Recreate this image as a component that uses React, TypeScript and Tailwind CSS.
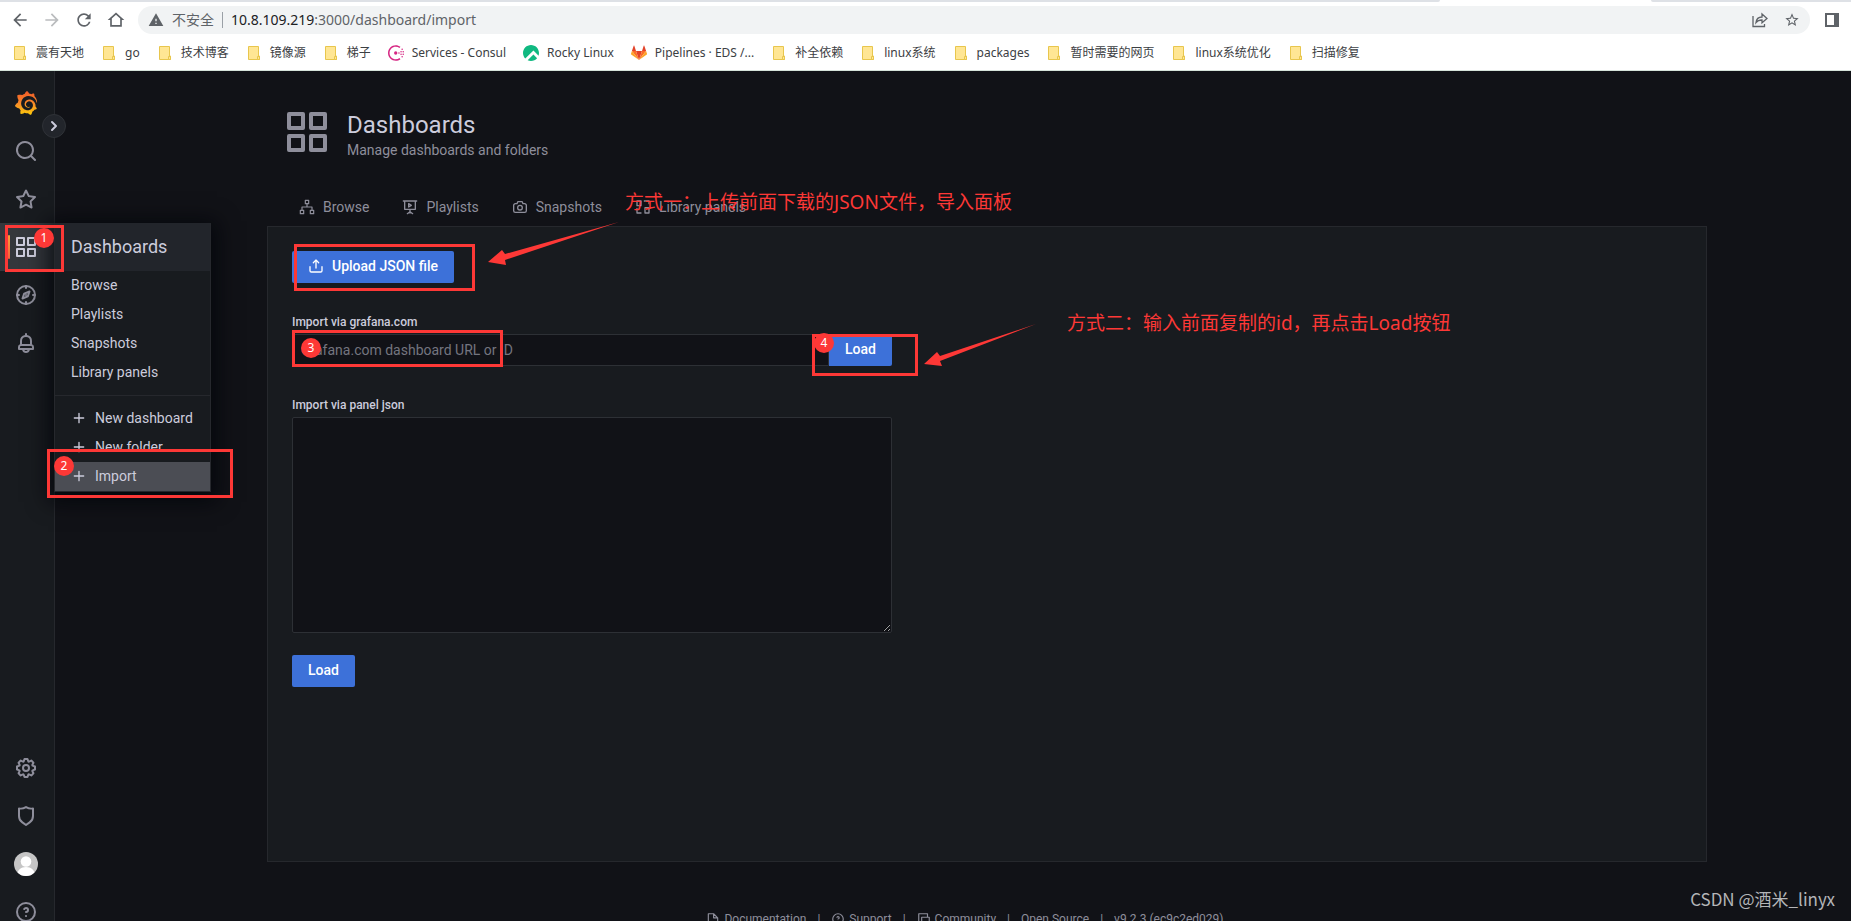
import { useState, type ReactNode } from "react";
import { SiConsul, SiGrafana, SiRockylinux } from "react-icons/si";

const ICON_PATHS = {
  apps: "M10,13H3a1,1,0,0,0-1,1v7a1,1,0,0,0,1,1h7a1,1,0,0,0,1-1V14A1,1,0,0,0,10,13ZM9,20H4V15H9ZM21,2H14a1,1,0,0,0-1,1v7a1,1,0,0,0,1,1h7a1,1,0,0,0,1-1V3A1,1,0,0,0,21,2ZM20,9H15V4h5Zm1,4H14a1,1,0,0,0-1,1v7a1,1,0,0,0,1,1h7a1,1,0,0,0,1-1V14A1,1,0,0,0,21,13Zm-1,7H15V15h5ZM10,2H3A1,1,0,0,0,2,3v7a1,1,0,0,0,1,1h7a1,1,0,0,0,1-1V3A1,1,0,0,0,10,2ZM9,9H4V4H9Z",
  search:
    "M21.71,20.29,18,16.61A9,9,0,1,0,16.61,18l3.68,3.68a1,1,0,0,0,1.42,0A1,1,0,0,0,21.71,20.29ZM11,18a7,7,0,1,1,7-7A7,7,0,0,1,11,18Z",
  star: "M22,9.67A1,1,0,0,0,21.14,9l-5.69-.83L12.9,3a1,1,0,0,0-1.8,0L8.55,8.16,2.86,9a1,1,0,0,0-.81.68,1,1,0,0,0,.25,1l4.13,4-1,5.68A1,1,0,0,0,6.9,21.44L12,18.77l5.1,2.67a.93.93,0,0,0,.46.12,1,1,0,0,0,.59-.19,1,1,0,0,0,.4-1l-1-5.68,4.13-4A1,1,0,0,0,22,9.67Zm-6.15,4a1,1,0,0,0-.29.88l.72,4.2-3.76-2a1.06,1.06,0,0,0-.94,0l-3.76,2,.72-4.2a1,1,0,0,0-.29-.88l-3-3,4.21-.61a1,1,0,0,0,.76-.55L12,5.7l1.88,3.82a1,1,0,0,0,.76.55l4.21.61Z",
  bell: "M18,13.18V10a6,6,0,0,0-5-5.91V3a1,1,0,0,0-2,0V4.09A6,6,0,0,0,6,10v3.18A3,3,0,0,0,4,16v2a1,1,0,0,0,1,1H8.14a4,4,0,0,0,7.72,0H19a1,1,0,0,0,1-1V16A3,3,0,0,0,18,13.18ZM8,10a4,4,0,0,1,8,0v3H8Zm4,10a2,2,0,0,1-1.72-1h3.44A2,2,0,0,1,12,20Zm6-3H6V16a1,1,0,0,1,1-1H17a1,1,0,0,1,1,1Z",
  cog: "M21.32,9.55l-1.89-.63.89-1.78A1,1,0,0,0,20.13,6L18,3.87a1,1,0,0,0-1.15-.19l-1.78.89-.63-1.89A1,1,0,0,0,13.5,2h-3a1,1,0,0,0-.95.68L8.92,4.57,7.14,3.68A1,1,0,0,0,6,3.87L3.87,6a1,1,0,0,0-.19,1.15l.89,1.78-1.89.63A1,1,0,0,0,2,10.5v3a1,1,0,0,0,.68.95l1.89.63-.89,1.78A1,1,0,0,0,3.87,18L6,20.13a1,1,0,0,0,1.15.19l1.78-.89.63,1.89a1,1,0,0,0,.95.68h3a1,1,0,0,0,.95-.68l.63-1.89,1.78.89A1,1,0,0,0,18,20.13L20.13,18a1,1,0,0,0,.19-1.15l-.89-1.78,1.89-.63A1,1,0,0,0,22,13.5v-3A1,1,0,0,0,21.32,9.55ZM20,12.78l-1.2.4A2,2,0,0,0,17.64,16l.57,1.14-1.1,1.1L16,17.64a2,2,0,0,0-2.79,1.16l-.4,1.2H11.22l-.4-1.2A2,2,0,0,0,8,17.64l-1.14.57-1.1-1.1L6.36,16A2,2,0,0,0,5.2,13.18L4,12.78V11.22l1.2-.4A2,2,0,0,0,6.36,8L5.79,6.89l1.1-1.1L8,6.36A2,2,0,0,0,10.82,5.2l.4-1.2h1.56l.4,1.2A2,2,0,0,0,16,6.36l1.14-.57,1.1,1.1L17.64,8a2,2,0,0,0,1.16,2.79l1.2.4ZM12,8a4,4,0,1,0,4,4A4,4,0,0,0,12,8Zm0,6a2,2,0,1,1,2-2A2,2,0,0,1,12,14Z",
  shield:
    "M19.63,3.65a1,1,0,0,0-.84-.2,8,8,0,0,1-6.22-1.27,1,1,0,0,0-1.14,0A8,8,0,0,1,5.21,3.45a1,1,0,0,0-.84.2A1,1,0,0,0,4,4.43v7.45a9,9,0,0,0,3.77,7.33l3.65,2.6a1,1,0,0,0,1.16,0l3.65-2.6A9,9,0,0,0,20,11.88V4.43A1,1,0,0,0,19.63,3.65ZM18,11.88a7,7,0,0,1-2.93,5.7L12,19.77,8.93,17.58A7,7,0,0,1,6,11.88V5.58a10,10,0,0,0,6-1.39,10,10,0,0,0,6,1.39Z",
  question:
    "M11.29,15.29a1.58,1.58,0,0,0-.12.15.76.76,0,0,0-.09.18.64.64,0,0,0-.06.18,1.36,1.36,0,0,0,0,.2.84.84,0,0,0,.08.38.9.9,0,0,0,.54.54.94.94,0,0,0,.76,0,.9.9,0,0,0,.54-.54A1,1,0,0,0,13,16a1,1,0,0,0-.29-.71A1,1,0,0,0,11.29,15.29ZM12,2A10,10,0,1,0,22,12,10,10,0,0,0,12,2Zm0,18a8,8,0,1,1,8-8A8,8,0,0,1,12,20ZM12,7A3,3,0,0,0,9.4,8.5a1,1,0,1,0,1.73,1A1,1,0,0,1,12,9a1,1,0,0,1,0,2,1,1,0,1,0,0,2,3,3,0,0,0,0-6Z",
  upload:
    "M8.71,7.71,11,5.41V15a1,1,0,0,0,2,0V5.41l2.29,2.3a1,1,0,0,0,1.42,0,1,1,0,0,0,0-1.42l-4-4a1,1,0,0,0-.33-.21,1,1,0,0,0-.76,0,1,1,0,0,0-.33.21l-4,4A1,1,0,1,0,8.71,7.71ZM21,12a1,1,0,0,0-1,1v6a1,1,0,0,1-1,1H5a1,1,0,0,1-1-1V13a1,1,0,0,0-2,0v6a3,3,0,0,0,3,3H19a3,3,0,0,0,3-3V13A1,1,0,0,0,21,12Z",
  plus: "M19,11H13V5a1,1,0,0,0-2,0v6H5a1,1,0,0,0,0,2h6v6a1,1,0,0,0,2,0V13h6a1,1,0,0,0,0-2Z",
  back: "M20 11H7.83l5.59-5.59L12 4l-8 8 8 8 1.41-1.41L7.83 13H20v-2z",
  forward: "M4 13h12.17l-5.59 5.59L12 20l8-8-8-8-1.41 1.41L16.17 11H4v2z",
  reload:
    "M17.65 6.35A7.958 7.958 0 0 0 12 4c-4.42 0-7.99 3.58-7.99 8s3.57 8 7.99 8c3.73 0 6.84-2.55 7.73-6h-2.08A5.99 5.99 0 0 1 12 18c-3.31 0-6-2.69-6-6s2.69-6 6-6c1.66 0 3.14.69 4.22 1.78L13 11h7V4l-2.35 2.35z",
  home: "M12 3L2 12h3v8h14v-8h3L12 3zm5 15H7v-7.8l5-4.5 5 4.5V18z",
  warning: "M1 21h22L12 2 1 21zm12-3h-2v-2h2v2zm0-4h-2v-4h2v4z",
  starOutline:
    "M22 9.24l-7.19-.62L12 2 9.19 8.63 2 9.24l5.46 4.73L5.82 21 12 17.27 18.18 21l-1.63-7.03L22 9.24zM12 15.4l-3.76 2.27 1-4.28-3.32-2.88 4.38-.38L12 6.1l1.71 4.04 4.38.38-3.32 2.88 1 4.28L12 15.4z",
};

function Icon({ name, className }: { name: keyof typeof ICON_PATHS; className: string }) {
  return (
    <svg viewBox="0 0 24 24" fill="currentColor" className={`shrink-0 ${className}`} aria-hidden="true">
      <path d={ICON_PATHS[name]} />
    </svg>
  );
}

function LineIcon({ className, children }: { className: string; children: ReactNode }) {
  return (
    <svg
      viewBox="0 0 24 24"
      fill="none"
      stroke="currentColor"
      strokeWidth={2}
      strokeLinejoin="round"
      strokeLinecap="round"
      className={`shrink-0 ${className}`}
      aria-hidden="true"
    >
      {children}
    </svg>
  );
}

function FolderIcon() {
  return (
    <svg viewBox="0 0 16 16" className="h-4 w-4 shrink-0" aria-hidden="true">
      <path d="M2.5 1.5h10v9.5h1v3.5h-11z" fill="#ffe694" stroke="#e8c64d" />
      <path d="M11.5 14.5v-3h2v3z" fill="#ffe694" stroke="#e8c64d" />
    </svg>
  );
}

function GitlabIcon() {
  return (
    <svg viewBox="0 0 16 16" className="h-4 w-4 shrink-0" aria-hidden="true">
      <path d="M8 15 11 6H5z" fill="#e24329" />
      <path d="M8 15 5 6H.9z" fill="#fc6d26" />
      <path d="M.9 6 0 8.7c-.1.3 0 .6.2.8L8 15z" fill="#fca326" />
      <path d="M.9 6H5L3.3.8c-.1-.3-.5-.3-.6 0z" fill="#e24329" />
      <path d="M8 15 11 6h4.100z" fill="#fc6d26" />
      <path d="m15.100 6 .9 2.700c.1.3 0 .6-.2.8L8 15z" fill="#fca326" />
      <path d="M15.100 6H11L12.700.8c.1-.3.5-.3.6 0z" fill="#e24329" />
    </svg>
  );
}

const bookmarks: { label: string; icon?: ReactNode }[] = [
  { label: "震有天地" },
  { label: "go" },
  { label: "技术博客" },
  { label: "镜像源" },
  { label: "梯子" },
  { label: "Services - Consul", icon: <SiConsul className="h-4 w-4 shrink-0 text-[#d62783]" /> },
  { label: "Rocky Linux", icon: <SiRockylinux className="h-4 w-4 shrink-0 text-[#10b981]" /> },
  { label: "Pipelines · EDS /...", icon: <GitlabIcon /> },
  { label: "补全依赖" },
  { label: "linux系统" },
  { label: "packages" },
  { label: "暂时需要的网页" },
  { label: "linux系统优化" },
  { label: "扫描修复" },
];

function BrowserChrome() {
  return (
    <header className="shrink-0 border-b border-[#d5e3da] bg-white font-['Noto_Sans','Noto_Sans_CJK_SC',sans-serif] text-[#5f6368]">
      <div className="flex h-0.5 justify-between">
        <div className="w-[1440px] rounded-br bg-[#dee1e6]" />
        <div className="w-[200px] rounded-bl bg-[#dee1e6]" />
      </div>
      <div className="flex h-9 items-center gap-3 pr-3 pl-[10px]">
        <button type="button" aria-label="Back">
          <Icon name="back" className="h-5 w-5" />
        </button>
        <button type="button" aria-label="Forward" className="text-[#babcbe]">
          <Icon name="forward" className="h-5 w-5" />
        </button>
        <button type="button" aria-label="Reload">
          <Icon name="reload" className="h-5 w-5" />
        </button>
        <button type="button" aria-label="Home">
          <Icon name="home" className="h-5 w-5" />
        </button>
        <div className="flex h-7 flex-1 items-center rounded-full bg-[#f1f3f4] px-[10px] text-sm">
          <Icon name="warning" className="h-4 w-4" />
          <span className="ml-2">不安全</span>
          <span className="mx-2 h-4 w-px bg-[#9aa0a6]" />
          <span className="flex-1">
            <span className="text-[#202124]">10.8.109.219</span>:3000/dashboard/import
          </span>
          <button type="button" aria-label="Share">
            <svg viewBox="0 0 16 16" fill="none" stroke="currentColor" strokeWidth={1.3} className="h-4 w-4">
              <path d="M1 4v10.500h11.500V12" />
              <path d="M4 10.500c.4-3.600 2.600-5.400 6-5.500V2l5 4.500-5 4.300V8c-2.700 0-4.600.7-6 2.500z" />
            </svg>
          </button>
          <button type="button" aria-label="Bookmark this page" className="ml-4">
            <Icon name="starOutline" className="h-4 w-4" />
          </button>
        </div>
        <button type="button" aria-label="Side panel" className="ml-[3px] h-3.5 w-3.5 border-2 border-r-[5px] border-[#5f6368]" />
      </div>
      <nav className="flex h-8 items-center gap-[17px] px-3 pb-0.5 text-xs text-[#3c4043]">
        {bookmarks.map((b) => (
          <a key={b.label} href="#" className="flex items-center gap-2 whitespace-nowrap">
            {b.icon ?? <FolderIcon />}
            {b.label}
          </a>
        ))}
      </nav>
    </header>
  );
}

function NavItem({ label, active, children }: { label: string; active?: boolean; children: ReactNode }) {
  return (
    <li className={active ? "relative bg-[#34373c] text-[#ccccdc]" : "text-[#8e8e9b]"}>
      {active && <span className="absolute top-3 left-2 h-6 w-0.5 rounded-sm bg-gradient-to-b from-[#f2a23a] to-[#f55f3e]" />}
      <a href="#" aria-label={label} className="flex h-12 w-[52px] items-center justify-center">
        {children}
      </a>
    </li>
  );
}

function DashboardsMenu() {
  const links = ["Browse", "Playlists", "Snapshots", "Library panels"];
  const actions = ["New dashboard", "New folder", "Import"];

  return (
    <div className="absolute top-0 left-[54px] z-10 w-[157px] border-r border-b border-l border-[#26282d] bg-[#181b1f] text-sm text-[#ccccdc] shadow-[0_4px_20px_6px_rgba(1,4,9,0.75)]">
      <h2 className="flex h-12 items-center bg-[#22252b] px-4 text-lg">Dashboards</h2>
      <ul>
        {links.map((l) => (
          <li key={l}>
            <a href="#" className="flex h-[29px] items-center px-4 pb-0.5">
              {l}
            </a>
          </li>
        ))}
      </ul>
      <hr className="my-2 border-[#26282d]" />
      <ul>
        {actions.map((a) => (
          <li key={a}>
            <a href="#" className={`flex h-[29px] items-center gap-2 px-4 pb-0.5 ${a === "Import" ? "bg-[#4b4d54]" : ""}`}>
              <Icon name="plus" className="h-4 w-4" />
              {a}
            </a>
          </li>
        ))}
      </ul>
    </div>
  );
}

function Sidebar() {
  return (
    <aside className="relative z-10 flex h-[calc(100vh-56px)] w-[55px] shrink-0 flex-col justify-between border-r border-[#26282d] bg-[#181b1f] pt-2">
      <ul className="relative">
        <NavItem label="Home">
          <svg className="absolute h-0 w-0" aria-hidden="true">
            <linearGradient id="grafana" x1="0" y1="0" x2="0" y2="1">
              <stop offset="0" stopColor="#f05a28" />
              <stop offset="0.500" stopColor="#f7882a" />
              <stop offset="1" stopColor="#fbca0a" />
            </linearGradient>
          </svg>
          <SiGrafana className="h-6 w-6" fill="url(#grafana)" />
        </NavItem>
        <NavItem label="Search">
          <Icon name="search" className="h-6 w-6" />
        </NavItem>
        <NavItem label="Starred">
          <Icon name="star" className="h-6 w-6" />
        </NavItem>
        <NavItem label="Dashboards" active>
          <Icon name="apps" className="h-6 w-6" />
        </NavItem>
        <NavItem label="Explore">
          <LineIcon className="h-6 w-6">
            <circle cx="12" cy="12" r="9" />
            <path d="M12 3v2M12 19v2M3 12h2M19 12h2" />
            <path d="M15.500 8.500 13.800 13.400 8.500 15.500 10.200 10.600z" />
            <path d="M12 12v.01" />
          </LineIcon>
        </NavItem>
        <NavItem label="Alerting">
          <Icon name="bell" className="h-6 w-6" />
        </NavItem>
        <li className="absolute top-36 left-0">
          <DashboardsMenu />
        </li>
      </ul>
      <ul>
        <NavItem label="Configuration">
          <Icon name="cog" className="h-6 w-6" />
        </NavItem>
        <NavItem label="Server Admin">
          <Icon name="shield" className="h-6 w-6" />
        </NavItem>
        <NavItem label="Profile">
          <svg viewBox="0 0 24 24" className="h-6 w-6 rounded-full bg-[#c5c5c5]" fill="#fff" aria-hidden="true">
            <circle cx="12" cy="9.500" r="5.300" />
            <path d="M3 24c0-6 4-9 9-9s9 3 9 9z" />
          </svg>
        </NavItem>
        <NavItem label="Help">
          <Icon name="question" className="h-6 w-6" />
        </NavItem>
      </ul>
      <button
        type="button"
        aria-label="Expand menu"
        className="absolute top-[43px] left-[42px] flex h-6 w-6 items-center justify-center rounded-full border border-[#2f3237] bg-[#22252b] text-[#ccccdc]"
      >
        <LineIcon className="h-4 w-4">
          <path d="m9 6 6 6-6 6" strokeWidth={3} />
        </LineIcon>
      </button>
    </aside>
  );
}

const tabs: { label: string; icon: ReactNode }[] = [
  {
    label: "Browse",
    icon: (
      <LineIcon className="h-4 w-4">
        <path
          d="M9.500 2h5v5h-5zM2 17h5v5H2zM17 17h5v5h-5zM12 7.500v4.500M4.500 16.500V12h15v4.500"
          strokeWidth={1.8}
        />
      </LineIcon>
    ),
  },
  {
    label: "Playlists",
    icon: (
      <LineIcon className="h-4 w-4">
        <path d="M2 3h20M4 3v12.500h16V3M12 16v5M8 22l4-3 4 3M10 7v5l4-2.500z" />
      </LineIcon>
    ),
  },
  {
    label: "Snapshots",
    icon: (
      <LineIcon className="h-4 w-4">
        <path d="M5 7h2.500l1.200-3h6.600l1.200 3H19a2.500 2.500 0 0 1 2.500 2.500v8A2.500 2.500 0 0 1 19 20H5a2.500 2.500 0 0 1-2.500-2.500v-8A2.500 2.500 0 0 1 5 7z" />
        <circle cx="12" cy="13" r="3.500" />
      </LineIcon>
    ),
  },
  {
    label: "Library panels",
    icon: (
      <LineIcon className="h-4 w-4">
        <path d="M3 3h6v7H3zM3 14v7h6M14 3h7v4M15 13h6v8h-6z" />
      </LineIcon>
    ),
  },
];

const footerLinks: { label: string; icon?: ReactNode }[] = [
  {
    label: "Documentation",
    icon: (
      <LineIcon className="h-3.5 w-3.5">
        <path d="M4 3h9l7 7v11H4zM13 3v7h7" />
      </LineIcon>
    ),
  },
  { label: "Support", icon: <Icon name="question" className="h-3.5 w-3.5" /> },
  {
    label: "Community",
    icon: (
      <LineIcon className="h-3.5 w-3.5">
        <path d="M7 17H3V3h15v5M8 9h13v12l-3-3H8z" />
      </LineIcon>
    ),
  },
  { label: "Open Source" },
  { label: "v9.2.3 (ec9c2ed029)" },
];

function ImportPage() {
  const [dashboardId, setDashboardId] = useState("");
  const [json, setJson] = useState("");

  return (
    <main className="min-w-0 flex-1">
      <div className="pt-[37px] pr-36 pl-[212px]">
        <div className="flex gap-4 pl-4">
          <Icon name="apps" className="h-12 w-12 text-[#8e8e9b]" />
          <div>
            <h1 className="text-2xl leading-[34px]">Dashboards</h1>
            <p className="text-sm leading-4 text-[#8e8e9b]">Manage dashboards and folders</p>
          </div>
        </div>
        <nav className="mt-[30px] flex h-[38px] gap-px pl-4 text-sm text-[#8e8e9b]">
          {tabs.map((t) => (
            <a key={t.label} href="#" className="flex items-center gap-2 px-4 whitespace-nowrap">
              {t.icon}
              {t.label}
            </a>
          ))}
        </nav>
        <section className="min-h-[636px] border border-[#26282d] bg-[#181b1f] p-6">
          <button
            type="button"
            className="flex h-8 items-center gap-2 rounded-xs bg-[#3d71d9] px-4 pb-0.5 text-sm font-medium text-white"
          >
            <Icon name="upload" className="h-4 w-4" />
            Upload JSON file
          </button>
          <form className="max-w-[600px]" onSubmit={(e) => e.preventDefault()}>
            <label htmlFor="dashboard-id" className="mt-[33px] mb-1.5 block text-xs leading-3 font-medium">
              Import via grafana.com
            </label>
            <div className="flex h-8">
              <input
                id="dashboard-id"
                value={dashboardId}
                onChange={(e) => setDashboardId(e.target.value)}
                placeholder="Grafana.com dashboard URL or ID"
                className="min-w-0 flex-1 rounded-l-xs border border-[#2d3035] bg-[#111217] px-2 text-sm outline-none placeholder:text-[#74757f]"
              />
              <button type="submit" className="rounded-r-xs bg-[#3d71d9] px-4 pb-0.5 text-sm font-medium text-white">
                Load
              </button>
            </div>
          </form>
          <form className="max-w-[600px]" onSubmit={(e) => e.preventDefault()}>
            <label htmlFor="panel-json" className="mt-[33px] mb-1.5 block text-xs leading-3 font-medium">
              Import via panel json
            </label>
            <textarea
              id="panel-json"
              value={json}
              onChange={(e) => setJson(e.target.value)}
              className="block h-[216px] w-full rounded-xs border border-[#2d3035] bg-[#111217] p-2 text-sm outline-none"
            />
            <button type="submit" className="mt-[22px] h-8 rounded-xs bg-[#3d71d9] px-4 pb-0.5 text-sm font-medium text-white">
              Load
            </button>
          </form>
        </section>
      </div>
      <footer className="mt-[49px] flex justify-center pl-6 text-xs text-[#8e8e9b]">
        {footerLinks.map((l, i) => (
          <div key={l.label} className="flex items-center whitespace-nowrap">
            {i > 0 && <span className="px-[11px]">|</span>}
            <a href="#" className="flex items-center gap-1">
              {l.icon}
              {l.label}
            </a>
          </div>
        ))}
      </footer>
    </main>
  );
}

function Frame({ className }: { className: string }) {
  return <div className={`absolute border-3 border-[#fd3836] ${className}`} />;
}

function Badge({ n, className }: { n: number; className: string }) {
  return (
    <span className={`absolute flex h-5 w-5 items-center justify-center rounded-full bg-[#fd3836] text-xs text-white ${className}`}>
      {n}
    </span>
  );
}

// Step markers and notes drawn over the page
function Annotations() {
  return (
    <div className="pointer-events-none absolute inset-0 z-20 font-['Noto_Sans','Noto_Sans_CJK_SC',sans-serif] whitespace-nowrap text-[#fd3836]">
      <Frame className="top-[225px] left-[5px] h-[47px] w-[59px]" />
      <Badge n={1} className="top-[228px] left-[34px]" />
      <Frame className="top-[449px] left-[47px] h-[49px] w-[186px]" />
      <Badge n={2} className="top-[456px] left-[54px]" />
      <Frame className="top-[244px] left-[294px] h-[47px] w-[181px]" />
      <Frame className="top-[330px] left-[292px] h-[37px] w-[211px]" />
      <Badge n={3} className="top-[338px] left-[301px]" />
      <Frame className="top-[334px] left-[812px] h-[42px] w-[106px]" />
      <Badge n={4} className="top-[333px] left-[814px]" />
      <svg viewBox="0 0 132 44" fill="currentColor" className="absolute top-[221px] left-[488px] h-11 w-[132px]">
        <path d="M0 41 14 29 17 33 131 1 17 39 18 44z" />
      </svg>
      <svg viewBox="0 0 112 42" fill="currentColor" className="absolute top-[324px] left-[924px] h-[42px] w-28">
        <path d="M0 40 13 28 16 32 112 0 16 37 18 42z" />
      </svg>
      <p className="absolute top-[188px] left-[625px] text-[19px] leading-7">方式一：上传前面下载的JSON文件，导入面板</p>
      <p className="absolute top-[309px] left-[1067px] text-[19px] leading-7">方式二：输入前面复制的id，再点击Load按钮</p>
      <p className="absolute right-4 bottom-2 font-['Noto_Sans_CJK_SC',sans-serif] text-[17px] leading-7 text-[#b4b5b8]">
        CSDN @酒米_linyx
      </p>
    </div>
  );
}

export default function App() {
  return (
    <div className="relative flex h-screen flex-col overflow-hidden bg-[#111217] font-['Roboto','Noto_Sans_CJK_SC',sans-serif] text-[#ccccdc]">
      <BrowserChrome />
      <div className="flex min-h-0 flex-1">
        <Sidebar />
        <ImportPage />
      </div>
      <Annotations />
    </div>
  );
}
